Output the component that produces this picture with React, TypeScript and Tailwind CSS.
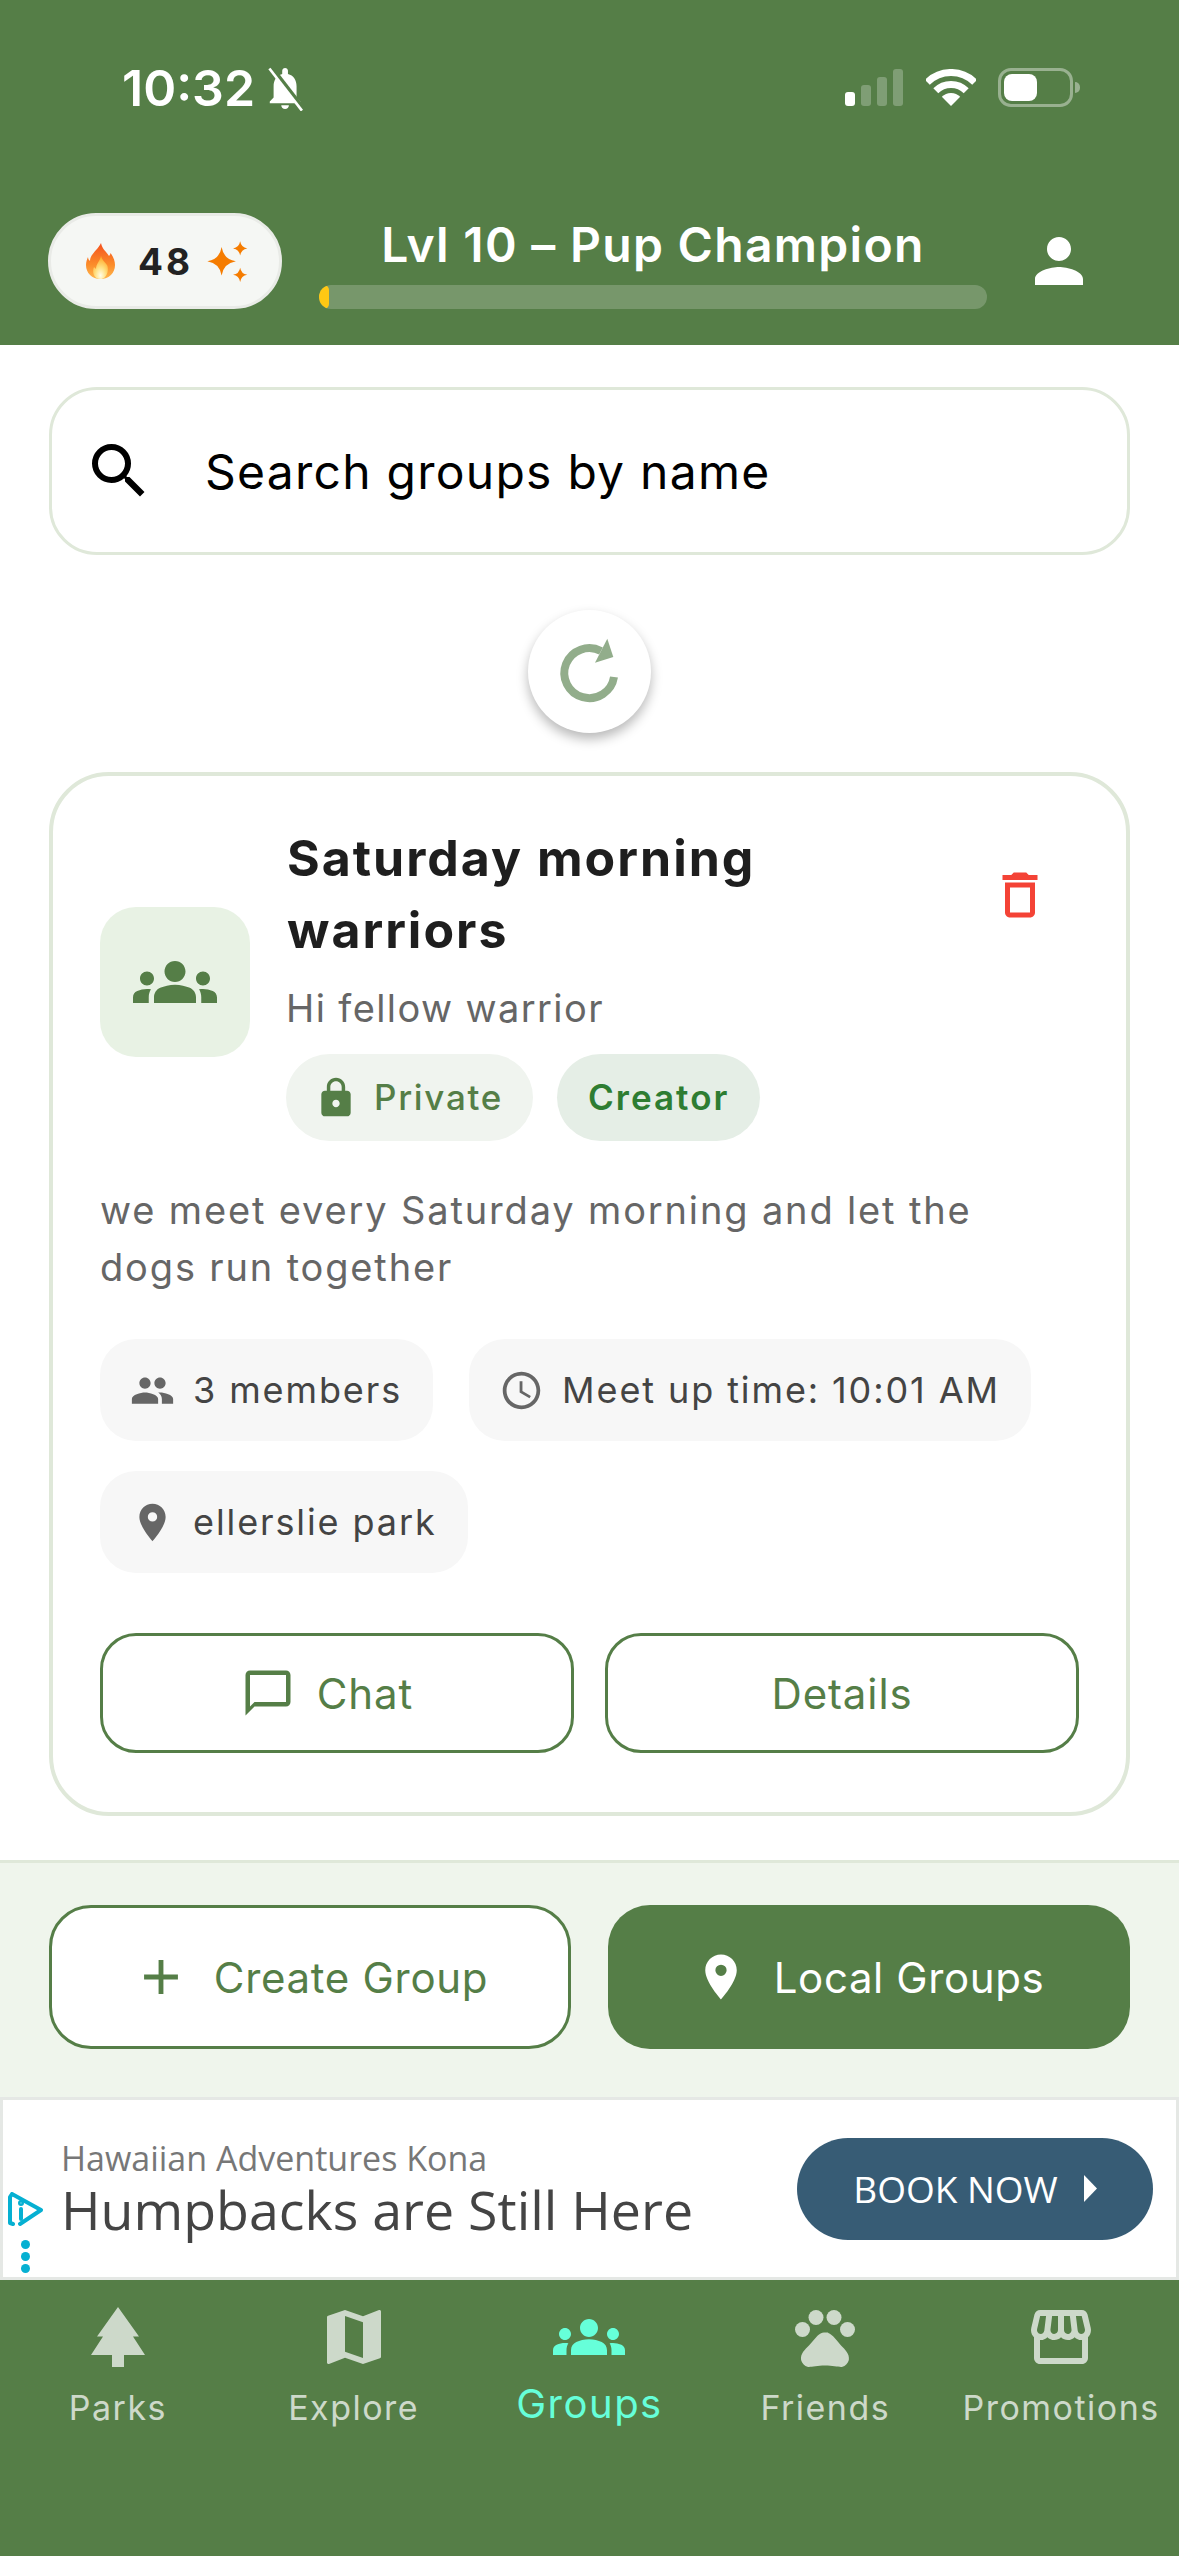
import React from "react";
import {
  MdPerson, MdSearch, MdGroups, MdDeleteOutline, MdLock, MdPeople, MdAccessTime, MdPlace,
  MdChatBubbleOutline, MdAdd, MdPets, MdMap, MdOutlineStorefront,
} from "react-icons/md";

const star = (cx: number, cy: number, r: number) => {
  const k = r * 0.14;
  return `M${cx} ${cy - r}Q${cx + k} ${cy - k} ${cx + r} ${cy}Q${cx + k} ${cy + k} ${cx} ${cy + r}Q${cx - k} ${cy + k} ${cx - r} ${cy}Q${cx - k} ${cy - k} ${cx} ${cy - r}Z`;
};

function StatusBar() {
  return (
    <div className="flex items-start pt-[64px] pl-[122px] pr-[106px] h-[130px]">
      <span className="text-[50px] leading-[48px] font-semibold text-white">10:32</span>
      <svg viewBox="3 1 20 23" className="w-[42px] h-[44px] ml-[11px] mt-[3px]">
        <path fill="#fff" d="M12 23c1.100 0 2-.9 2-2h-4c0 1.100.9 2 2 2zm6-6v-6c0-3.070-1.640-5.640-4.500-6.320V3c0-.83-.67-1.500-1.500-1.500s-1.500.67-1.500 1.500v1.680C7.630 5.360 6 7.920 6 11v6l-2 2v1h16v-1l-2-2z" />
        <path stroke="#557e47" strokeWidth="2.600" d="M4.500 1 21.500 23" />
        <path stroke="#fff" strokeWidth="1.400" d="M3.800 1.800 20.800 23.800" />
      </svg>
      <div className="ml-auto flex items-end mt-[5px] h-[37px]">
        <div className="w-[10px] h-[14px] rounded-[3px] bg-white" />
        <div className="w-[10px] h-[21px] rounded-[3px] bg-white/25 ml-[6px]" />
        <div className="w-[10px] h-[29px] rounded-[3px] bg-white/25 ml-[6px]" />
        <div className="w-[10px] h-[37px] rounded-[3px] bg-white/25 ml-[6px]" />
        <svg viewBox="0 0 50 37" className="w-[50px] h-[37px] ml-[23px]">
          <path d="M1.300 13.300A33.500 33.500 0 0 1 48.700 13.300" fill="none" stroke="#fff" strokeWidth="7" />
          <path d="M9.800 21.800A21.500 21.500 0 0 1 40.200 21.800" fill="none" stroke="#fff" strokeWidth="7" />
          <path d="M25 37 15.800 27.800A13 13 0 0 1 34.200 27.800Z" fill="#fff" />
        </svg>
        <div className="relative ml-[22px] w-[75px] h-[39px] mb-[-1px] rounded-[13px] border-[3px] border-white/40 p-[3px]">
          <div className="w-[33px] h-[27px] rounded-[8px] bg-white" />
          <div className="absolute right-[-10px] top-[11px] w-[5px] h-[11px] rounded-r-[5px] bg-white/40" />
        </div>
      </div>
    </div>
  );
}

function Flame() {
  return (
    <svg viewBox="0 0 29 36" className="w-[29px] h-[36px]">
      <defs>
        <linearGradient id="fo" x1="0" y1="0" x2="0" y2="1">
          <stop offset="0" stopColor="#f4511e" />
          <stop offset="0.6" stopColor="#fb8c2a" />
          <stop offset="1" stopColor="#ffb74d" />
        </linearGradient>
        <radialGradient id="fi" cx="0.5" cy="0.85" r="0.8">
          <stop offset="0" stopColor="#fffde7" />
          <stop offset="0.45" stopColor="#ffe082" />
          <stop offset="1" stopColor="#ffa726" />
        </radialGradient>
      </defs>
      <path fill="url(#fo)" d="M15 0c1 6 5 8 8 13 1-1 1.500-2 1.500-3 3 4 4.500 8 4.500 12 0 8-6 14-14.500 14S0 30 0 22c0-3 1-6 2-8 0 2 1 3 2 4C4 11 12 7 15 0Z" />
      <path fill="url(#fi)" d="M15 13c1 4 4 6 6 9 2 3 1 14-6.500 14S6 28 8 24c1 1 1.500 1.500 2 2 0-5 4-8 5-13Z" />
    </svg>
  );
}

function Header() {
  return (
    <header className="h-[345px] shrink-0 bg-[#557e47]">
      <StatusBar />
      <div className="flex pl-[48px] mt-[83px]">
        <div className="w-[234px] h-[96px] rounded-full bg-[#f5f7f4] border-[3px] border-[#e9ebe7] flex items-center pl-[35px]">
          <Flame />
          <span className="ml-[23px] text-[37px] leading-none font-bold text-[#222] tracking-[3px]">48</span>
          <svg viewBox="0 0 113 115" className="w-[41px] h-[41px] ml-[14px] fill-[#f57c00]">
            <path d={star(40, 57, 40)} />
            <path d={star(92, 21, 20)} />
            <path d={star(92, 95, 20)} />
          </svg>
        </div>
        <div className="ml-[37px] w-[668px] h-[96px] flex flex-col justify-between">
          <div className="text-center text-[48px] leading-[58px] font-semibold text-white tracking-[1.300px] mt-[3px]">Lvl 10 – Pup Champion</div>
          <div className="h-[24px] rounded-full bg-white/20 overflow-hidden">
            <div className="w-[10px] h-full rounded-full bg-[#ffc814]" />
          </div>
        </div>
        <MdPerson className="ml-[36px] mt-[12px] w-[72px] h-[72px] text-white" />
      </div>
    </header>
  );
}

function MetaChip({ icon, children }: { icon: React.ReactNode; children: React.ReactNode }) {
  return (
    <div className="h-[102px] rounded-[36px] bg-[#f7f7f7] flex items-center pl-[30px] pr-[31px] gap-[18px] text-[36px] text-[#444] tracking-[1.900px]">
      {icon}
      <span>{children}</span>
    </div>
  );
}

function Card() {
  return (
    <section className="mt-[39px] rounded-[60px] border-[4px] border-[#dfe8d9] px-[47px] pt-[46px] pb-[59px]">
      <div className="flex items-center">
        <div className="w-[150px] h-[150px] rounded-[36px] bg-[#e8f2e4] flex items-center justify-center shrink-0">
          <MdGroups className="w-[84px] h-[84px] text-[#557e47]" />
        </div>
        <div className="ml-[36px] w-[600px]">
          <h2 className="text-[50px] leading-[72px] font-bold text-[#1e1e1e] tracking-[2px] w-[520px] pl-[1px]">Saturday morning warriors</h2>
          <p className="mt-[15px] text-[38px] leading-[54px] text-[#666] tracking-[1.400px]">Hi fellow warrior</p>
          <div className="mt-[19px] flex gap-[24px]">
            <div className="h-[87px] rounded-full bg-[#f0f4ef] flex items-center pl-[28px] pr-[30px] gap-[16px] text-[35px] font-medium text-[#557e47] tracking-[1.700px]">
              <MdLock className="w-[44px] h-[44px]" />
              <span>Private</span>
            </div>
            <div className="h-[87px] rounded-full bg-[#e5eee6] flex items-center px-[31px] text-[35px] font-semibold text-[#2e7d32] tracking-[2px]">Creator</div>
          </div>
        </div>
        <MdDeleteOutline className="self-start ml-auto mr-[29px] mt-[43px] w-[60px] h-[60px] text-[#f44336]" />
      </div>
      <p className="mt-[41px] text-[38px] leading-[57px] text-[#666] tracking-[1.850px] w-[940px]">we meet every Saturday morning and let the dogs run together</p>
      <div className="mt-[43px] flex flex-wrap gap-x-[36px] gap-y-[30px]">
        <MetaChip icon={<MdPeople className="w-[45px] h-[45px] text-[#666]" />}>3 members</MetaChip>
        <MetaChip icon={<MdAccessTime className="w-[45px] h-[45px] text-[#666]" />}>Meet up time: 10:01 AM</MetaChip>
        <MetaChip icon={<MdPlace className="w-[45px] h-[45px] text-[#666]" />}>ellerslie park</MetaChip>
      </div>
      <div className="mt-[60px] grid grid-cols-2 gap-[31px]">
        <div className="h-[120px] rounded-[36px] border-[3px] border-[#557e47] flex items-center justify-center text-[42px] text-[#557e47] tracking-[0.900px]">
          <div className="flex items-center gap-[22px] mr-[20px]">
            <MdChatBubbleOutline className="w-[54px] h-[54px]" />
            <span>Chat</span>
          </div>
        </div>
        <div className="h-[120px] rounded-[36px] border-[3px] border-[#557e47] flex items-center justify-center text-[42px] text-[#557e47] tracking-[0.900px]">Details</div>
      </div>
    </section>
  );
}

function Main() {
  return (
    <main className="h-[1515px] shrink-0 px-[49px] pt-[42px] bg-white">
      <div className="h-[168px] rounded-[48px] border-[3px] border-[#dfe8d9] flex items-center pl-[31px] gap-[50px]">
        <MdSearch className="w-[72px] h-[72px] text-black" />
        <span className="text-[48px] text-black tracking-[1.250px] mt-[1px]">Search groups by name</span>
      </div>
      <div className="mt-[55px] flex justify-center">
        <div className="w-[123px] h-[123px] rounded-full bg-white shadow-[0_6px_12px_rgba(0,0,0,0.28)] flex items-center justify-center">
          <svg viewBox="0 0 160 160" className="w-[160px] h-[160px] shrink-0 fill-none">
            <path d="M104 85A25 25 0 1 1 91 59" stroke="#92ad8b" strokeWidth="8" />
            <path d="M97.300 46.700 103.300 65 85 70.700Z" fill="#92ad8b" />
          </svg>
        </div>
      </div>
      <Card />
    </main>
  );
}

function Actions() {
  return (
    <div className="h-[237px] shrink-0 border-t-[3px] border-[#dfe8d9] bg-[#eff5ec] px-[49px] pt-[42px] grid grid-cols-2 gap-[37px] items-start">
      <div className="h-[144px] rounded-[42px] border-[3px] border-[#557e47] bg-white flex items-center justify-center gap-[24px] text-[42px] text-[#557e47] tracking-[0.700px]">
        <MdAdd className="w-[58px] h-[58px]" />
        <span>Create Group</span>
      </div>
      <div className="h-[144px] rounded-[42px] bg-[#557e47] flex items-center justify-center gap-[26px] text-[42px] text-white tracking-[0.600px]">
        <MdPlace className="w-[54px] h-[54px]" />
        <span>Local Groups</span>
      </div>
    </div>
  );
}

function Ad() {
  return (
    <div className="relative h-[183px] shrink-0 border-[3px] border-[#e5e8e5] bg-white flex items-center pl-[58px] pr-[23px]">
      <svg viewBox="0 0 36 36" className="absolute left-[5px] top-[92px] w-[36px] h-[36px] fill-none stroke-[#06b0d2]" strokeWidth="4" strokeLinejoin="round" strokeLinecap="round">
        <path d="M5 32 2 31V5L4 2 33 18 12 32" />
        <path d="M13 17V27" />
        <circle cx="13" cy="11" r="1" fill="#06b0d2" />
      </svg>
      <div className="absolute left-[18px] top-[140px] flex flex-col gap-[3px]">
        <div className="w-[9px] h-[9px] rounded-full bg-[#06b0d2]" />
        <div className="w-[9px] h-[9px] rounded-full bg-[#06b0d2]" />
        <div className="w-[9px] h-[9px] rounded-full bg-[#06b0d2]" />
      </div>
      <div className="font-['Open_Sans',sans-serif]">
        <div className="text-[34px] leading-[42px] text-[#777]">Hawaiian Adventures Kona</div>
        <div className="text-[53.700px] leading-[62px] text-[#444]">Humpbacks are Still Here</div>
      </div>
      <div className="ml-auto w-[356px] h-[102px] rounded-full bg-[#375c75] flex items-center justify-center gap-[26px] text-white font-['Open_Sans',sans-serif] text-[37px]">
        <span>BOOK NOW</span>
        <svg viewBox="0 0 13 27" className="w-[13px] h-[27px] fill-white"><path d="M0 0 13 13.500 0 27Z" /></svg>
      </div>
    </div>
  );
}

function Tab({ icon, label, active }: { icon: React.ReactNode; label: string; active?: boolean }) {
  return (
    <div className={active ? "flex flex-col items-center text-[#66ffd9]" : "flex flex-col items-center text-[#cdd9ca]"}>
      {icon}
      {active ? (
        <span className="mt-[7px] text-[40px] leading-[48px] tracking-[1.500px]">{label}</span>
      ) : (
        <span className="mt-[15px] text-[34px] leading-[40px] tracking-[1.500px] whitespace-nowrap">{label}</span>
      )}
    </div>
  );
}

function Tabs() {
  const cls = "w-[72px] h-[72px]";
  return (
    <nav className="flex-1 bg-[#557e47] grid grid-cols-5 pt-[21px]">
      <Tab label="Parks" icon={<svg viewBox="0 0 24 24" className={cls} fill="currentColor"><path d="M12 2 19 11.800H17L21 18H14V22H10V18H3L7 11.800H5Z" /></svg>} />
      <Tab label="Explore" icon={<MdMap className={cls} />} />
      <Tab label="Groups" active icon={<MdGroups className={cls} />} />
      <Tab label="Friends" icon={<MdPets className={cls} />} />
      <Tab label="Promotions" icon={<MdOutlineStorefront className={cls} />} />
    </nav>
  );
}

export default function App() {
  return (
    <div className="w-[1179px] h-[2556px] flex flex-col overflow-hidden font-[Inter,sans-serif] bg-white">
      <Header />
      <Main />
      <Actions />
      <Ad />
      <Tabs />
    </div>
  );
}
